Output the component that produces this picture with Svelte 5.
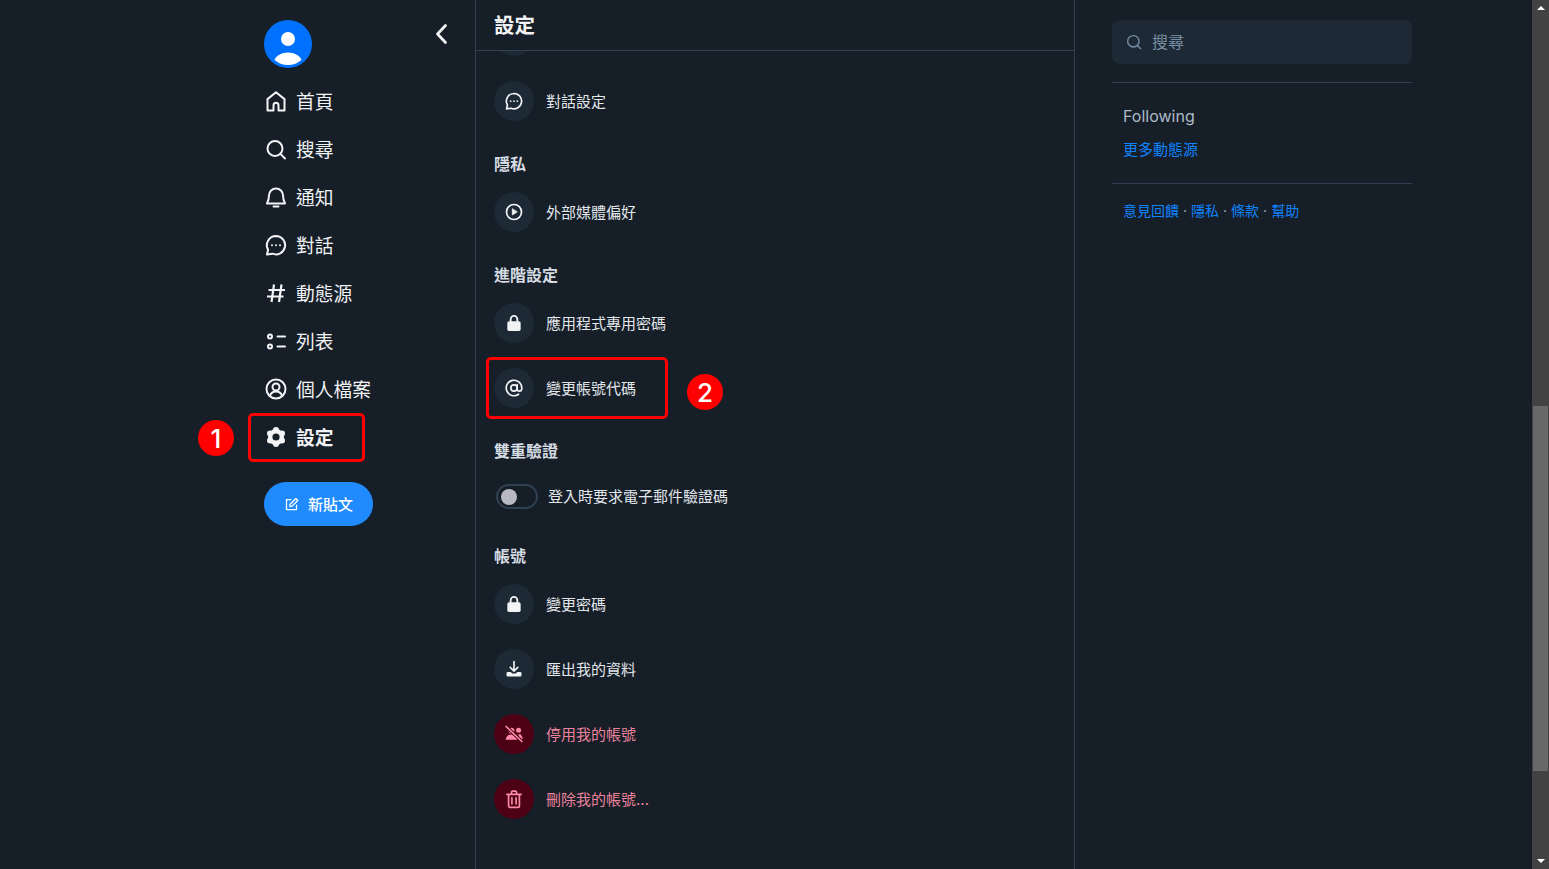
<script lang="ts">
	const nav = [
		{ icon: 'home', label: '首頁' },
		{ icon: 'search', label: '搜尋' },
		{ icon: 'bell', label: '通知' },
		{ icon: 'chat', label: '對話' },
		{ icon: 'hash', label: '動態源' },
		{ icon: 'list', label: '列表' },
		{ icon: 'user', label: '個人檔案' },
		{ icon: 'gear', label: '設定', active: true }
	];
</script>

{#snippet icon(name: string)}
	<svg class="ic" viewBox="0 0 24 24" fill="none" stroke="currentColor" stroke-width="2" stroke-linecap="round" stroke-linejoin="round">
		{#if name === 'home'}
			<path d="M12 3.300 3.500 10.100V21.500h6v-5.200a2.500 2.500 0 0 1 5 0v5.200h6V10.100z" />
		{:else if name === 'search'}
			<circle cx="11" cy="11.500" r="7.500" /><path d="M16.600 17.100 21 21.500" />
		{:else if name === 'bell'}
			<path d="M12 3.500a7 7 0 0 0-7 7c0 4-1 6-2 8h18c-1-2-2-4-2-8a7 7 0 0 0-7-7z" /><path d="M9.500 21.500h5" />
		{:else if name === 'chat'}
			<path d="M12 3a9.200 9.200 0 1 1-3.600 17.700L3 21.500l1.100-4.700A9.200 9.200 0 0 1 12 3z" />
			<circle cx="8" cy="12.200" r="1" fill="currentColor" stroke="none" /><circle cx="12" cy="12.200" r="1" fill="currentColor" stroke="none" /><circle cx="16" cy="12.200" r="1" fill="currentColor" stroke="none" />
		{:else if name === 'hash'}
			<path d="M10 3.500 7.500 21M17.500 3.500 15 21M4.500 9H21M3 15.500h16.500" stroke-width="2.200" stroke-linecap="butt" />
		{:else if name === 'list'}
			<circle cx="6" cy="7.500" r="2" /><circle cx="6" cy="17.500" r="2" /><path d="M13.500 7.500H21M13.500 17.500H21" />
		{:else if name === 'user'}
			<circle cx="12" cy="12" r="9.500" /><circle cx="12" cy="10" r="3.500" /><path d="M5.800 19c1-3 3.500-4.500 6.200-4.500s5.200 1.500 6.200 4.500" />
		{:else if name === 'gear'}
			<g fill="currentColor" stroke="none">
				<circle cx="12" cy="12" r="8" />
				<circle cx="12" cy="5" r="3" /><circle cx="12" cy="19" r="3" />
				<circle cx="6" cy="8.500" r="3" /><circle cx="18" cy="8.500" r="3" />
				<circle cx="6" cy="15.500" r="3" /><circle cx="18" cy="15.500" r="3" />
				<circle cx="12" cy="12" r="3.600" fill="#161e27" />
			</g>
		{:else if name === 'play'}
			<circle cx="12" cy="12" r="9" /><path d="M10 8.500v7l5.500-3.500z" fill="currentColor" stroke-width="1" />
		{:else if name === 'lock'}
			<path d="M8 10V7.500a4 4 0 0 1 8 0V10" stroke-width="2.200" /><rect x="4" y="10" width="16" height="11.500" rx="2" fill="currentColor" stroke="none" />
		{:else if name === 'at'}
			<circle cx="12" cy="12" r="3.800" /><path d="M15.800 8v5.500a2.800 2.800 0 0 0 5.500 0V12a9.300 9.300 0 1 0-3.800 7.500" />
		{:else if name === 'download'}
			<path d="M12 3v11M7.500 10l4.500 4.500 4.500-4.500" /><path d="M4.500 15.500h3.500l2 2h4l2-2h3.500a1.500 1.500 0 0 1 1.500 1.500v2.500a1.500 1.500 0 0 1-1.500 1.500H4.500A1.500 1.500 0 0 1 3 19.500V17a1.500 1.500 0 0 1 1.500-1.500z" fill="currentColor" stroke="none" />
		{:else if name === 'people-off'}
			<g fill="currentColor" stroke="none">
				<circle cx="9" cy="8" r="3.500" /><circle cx="17.500" cy="7.500" r="3" />
				<path d="M2 19c.5-4.500 3.500-6.500 7-6.500s6.500 2 7 6.500zM17.500 12c2.800 0 4.500 2 5 6h-5z" />
			</g>
			<path d="M3 3.500 21 20.500" stroke="#4d0115" stroke-width="4" />
			<path d="M2.500 3 21.500 21" stroke-width="2" />
		{:else if name === 'trash'}
			<path d="M3.500 6.500h17M9 6.500V4a1.500 1.500 0 0 1 1.500-1.500h3A1.500 1.500 0 0 1 15 4v2.500M5.500 6.500V20a2 2 0 0 0 2 2h9a2 2 0 0 0 2-2V6.500M9.500 10.500v7.500M14.500 10.500v7.500" />
		{/if}
	</svg>
{/snippet}

{#snippet row(name: string, label: string, danger = false)}
	<div class="row" class:danger>
		<span class="disc">{@render icon(name)}</span>
		<span class="label">{label}</span>
	</div>
{/snippet}

<div class="page">
	<aside class="left">
		<div class="top">
			<div class="avatar">
				<svg viewBox="0 0 48 48" width="48" height="48">
					<clipPath id="av"><circle cx="24" cy="24" r="21" /></clipPath>
					<circle cx="24" cy="24" r="24" fill="#0070ff" />
					<circle cx="24" cy="19" r="7" fill="#fff" />
					<ellipse cx="24" cy="42.600" rx="14" ry="10" fill="#fff" clip-path="url(#av)" />
				</svg>
			</div>
			<svg class="chevron" viewBox="0 0 24 24" fill="none" stroke="#f1f3f5" stroke-width="2.800" stroke-linecap="round" stroke-linejoin="round">
				<path d="M16.500 3.500 8.500 12l8 8.500" />
			</svg>
		</div>
		<nav>
			{#each nav as item}
				<div class="nav-item" class:active={item.active}>
					{@render icon(item.icon)}
					<span class="label">{item.label}</span>
				</div>
			{/each}
		</nav>
		<button class="compose">
			<svg viewBox="0 0 24 24" width="15" height="15" fill="none" stroke="#fff" stroke-width="2" stroke-linecap="round" stroke-linejoin="round">
				<path d="M11 4H4v16h16v-7" /><path d="M19 2.500 22 5.500 12.500 15H9.500v-3z" />
			</svg>
			<span class="label">新貼文</span>
		</button>
	</aside>

	<main class="center">
		<header>設定</header>
		<div class="list">
			<section class="first">
				<div class="row peek"><span class="disc"></span></div>
				{@render row('chat', '對話設定')}
			</section>
			<section>
				<h3>隱私</h3>
				{@render row('play', '外部媒體偏好')}
			</section>
			<section>
				<h3>進階設定</h3>
				{@render row('lock', '應用程式專用密碼')}
				{@render row('at', '變更帳號代碼')}
			</section>
			<section>
				<h3>雙重驗證</h3>
				<div class="toggle-row">
					<span class="toggle"><span class="knob"></span></span>
					<span class="label">登入時要求電子郵件驗證碼</span>
				</div>
			</section>
			<section>
				<h3>帳號</h3>
				{@render row('lock', '變更密碼')}
				{@render row('download', '匯出我的資料')}
				{@render row('people-off', '停用我的帳號', true)}
				{@render row('trash', '刪除我的帳號...', true)}
			</section>
		</div>
	</main>

	<aside class="right">
		<div class="search">
			<svg viewBox="0 0 24 24" width="16" height="16" fill="none" stroke="#788ea5" stroke-width="2" stroke-linecap="round">
				<circle cx="11" cy="11" r="8.500" /><path d="M17.500 17.500 22 22" />
			</svg>
			<span class="label">搜尋</span>
		</div>
		<div class="feeds">
			<div class="following">Following</div>
			<a href="#more">更多動態源</a>
		</div>
		<div class="links">
			<a href="#f">意見回饋</a><i>·</i><a href="#p">隱私</a><i>·</i><a href="#t">條款</a><i>·</i><a href="#h">幫助</a>
		</div>
	</aside>

	<div class="scrollbar">
		<span class="arrow up"></span>
		<div class="track"><div class="thumb"></div></div>
		<span class="arrow down"></span>
	</div>

	<div class="mark box-one"></div>
	<div class="badge badge-one">1</div>
	<div class="mark box-two"></div>
	<div class="badge badge-two">2</div>
</div>

<style>
	:global(body) {
		background: #161e27;
	}

	.page {
		position: relative;
		display: flex;
		height: 869px;
		overflow: hidden;
		background: #161e27;
		color: #f1f3f5;
		font-family: Inter, 'Noto Sans CJK TC', sans-serif;
	}

	.ic {
		width: 24px;
		height: 24px;
		flex-shrink: 0;
	}

	/* CJK glyphs sit a pixel low in this font, pull labels up */
	.label {
		margin-bottom: 2px;
	}

	.left {
		box-sizing: border-box;
		width: 476px;
		flex-shrink: 0;
		padding: 20px 0 0 264px;
		border-right: 1px solid #2e4052;
	}

	.top {
		display: flex;
		justify-content: space-between;
		padding-right: 22px;
		height: 48px;
	}

	.avatar {
		width: 48px;
		height: 48px;
	}

	.chevron {
		width: 24px;
		height: 24px;
		margin-top: 2px;
	}

	nav {
		margin-top: 9px;
	}

	.nav-item {
		display: flex;
		align-items: center;
		gap: 8px;
		height: 48px;
		font-size: 18.75px;
	}

	.nav-item.active {
		font-weight: 600;
	}

	.compose {
		display: flex;
		align-items: center;
		gap: 9px;
		margin-top: 21px;
		height: 44px;
		padding: 0 20px;
		border: none;
		border-radius: 22px;
		background: #208bfe;
		color: #fff;
		font: 500 15px Inter, 'Noto Sans CJK TC', sans-serif;
	}

	.center {
		box-sizing: border-box;
		width: 599px;
		flex-shrink: 0;
		display: flex;
		flex-direction: column;
		border-right: 1px solid #2e4052;
		overflow: hidden;
	}

	header {
		position: relative;
		z-index: 1;
		box-sizing: border-box;
		height: 51px;
		flex-shrink: 0;
		padding: 14px 18px 0;
		background: #161e27;
		border-bottom: 1px solid #2e4052;
		font-size: 20.500px;
		line-height: 24px;
		font-weight: 700;
	}

	.list {
		padding: 0 18px;
	}

	section {
		display: flex;
		flex-direction: column;
		gap: 25px;
		margin-top: 33px;
	}

	section.first {
		margin-top: -35px;
	}

	h3 {
		margin: 0 0 -7px;
		font-size: 16px;
		line-height: 20px;
		font-weight: 600;
		color: #d4dbe2;
	}

	.row {
		display: flex;
		align-items: center;
		gap: 12px;
		height: 40px;
		font-size: 15px;
		color: #e2e7ec;
	}

	.disc {
		display: flex;
		align-items: center;
		justify-content: center;
		width: 40px;
		height: 40px;
		border-radius: 50%;
		background: #1e2936;
		color: #f1f3f5;
	}

	.disc .ic {
		width: 20px;
		height: 20px;
	}

	.row.danger {
		color: #ec829b;
	}

	.danger .disc {
		background: #4d0115;
		color: #ff8aa6;
	}

	.toggle-row {
		display: flex;
		align-items: center;
		gap: 10px;
		margin: 5px 0 0 2px;
		padding-bottom: 4px;
		font-size: 15px;
		color: #e2e7ec;
	}

	.toggle {
		box-sizing: border-box;
		display: flex;
		align-items: center;
		width: 42px;
		height: 25px;
		padding-left: 3px;
		border: 2px solid #2e4052;
		border-radius: 13px;
	}

	.knob {
		width: 16px;
		height: 16px;
		border-radius: 50%;
		background: #b9b9c6;
	}

	.right {
		width: 300px;
		flex-shrink: 0;
		padding: 20px 0 0 37px;
	}

	.search {
		display: flex;
		align-items: center;
		gap: 10px;
		box-sizing: border-box;
		height: 44px;
		padding: 0 14px;
		background: #1e2936;
		border-radius: 8px;
		color: #788ea5;
		font-size: 16px;
	}

	.feeds {
		margin-top: 18px;
		padding: 23px 11px 23px;
		border-top: 1px solid #2e4052;
		border-bottom: 1px solid #2e4052;
	}

	.following {
		font-size: 16px;
		line-height: 20px;
		color: #aebbc9;
	}

	a {
		color: #1083fe;
		text-decoration: none;
	}

	.feeds a {
		display: block;
		margin-top: 14px;
		font-size: 15px;
		line-height: 20px;
	}

	.links {
		padding: 17px 11px;
		font-size: 14px;
		line-height: 20px;
	}

	.links i {
		font-style: normal;
		color: #aebbc9;
		margin: 0 4px;
	}

	.scrollbar {
		position: absolute;
		top: 0;
		right: 0;
		bottom: 0;
		width: 17px;
		display: flex;
		flex-direction: column;
		align-items: center;
		background: #424242;
	}

	.arrow {
		flex-shrink: 0;
		width: 0;
		height: 0;
		border-left: 4px solid transparent;
		border-right: 4px solid transparent;
	}

	.arrow.up {
		margin: 6px 0 5px;
		border-bottom: 4px solid #fff;
	}

	.arrow.down {
		margin: 5px 0 6px;
		border-top: 4px solid #fff;
	}

	.track {
		flex: 1;
		width: 100%;
	}

	.thumb {
		box-sizing: border-box;
		width: 15px;
		height: 365px;
		margin: 391px 0 0 1px;
		background: #686868;
	}

	.mark {
		position: absolute;
		box-sizing: border-box;
		border: 3px solid #f00;
		border-radius: 5px;
	}

	.box-one {
		left: 248px;
		top: 413px;
		width: 117px;
		height: 49px;
	}

	.box-two {
		left: 486px;
		top: 357px;
		width: 182px;
		height: 62px;
	}

	.badge {
		position: absolute;
		display: flex;
		align-items: center;
		justify-content: center;
		width: 36px;
		height: 36px;
		border-radius: 50%;
		background: #f00;
		color: #fff;
		font: 500 26px Inter, sans-serif;
	}

	.badge-one {
		left: 198px;
		top: 420px;
	}

	.badge-two {
		left: 687px;
		top: 374px;
	}
</style>
